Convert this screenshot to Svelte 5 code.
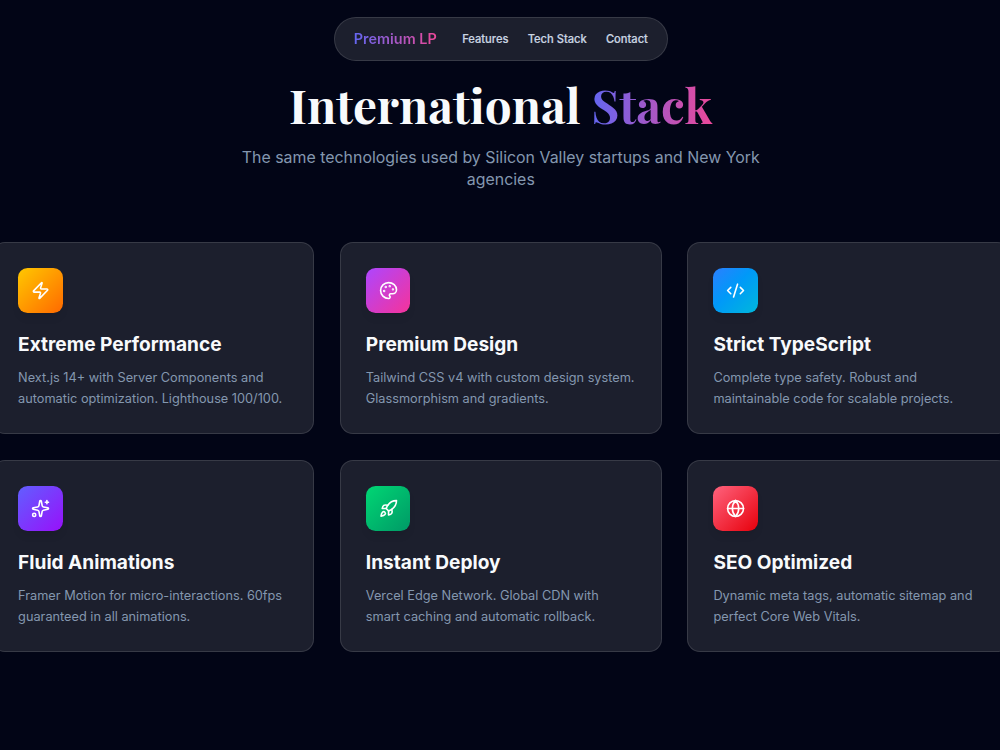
<script lang="ts">
  const links = ["Features", "Tech Stack", "Contact"];

  const features = [
    {
      icon: "zap",
      title: "Extreme Performance",
      lines: ["Next.js 14+ with Server Components and", "automatic optimization. Lighthouse 100/100."],
    },
    {
      icon: "palette",
      title: "Premium Design",
      lines: ["Tailwind CSS v4 with custom design system.", "Glassmorphism and gradients."],
    },
    {
      icon: "code",
      title: "Strict TypeScript",
      lines: ["Complete type safety. Robust and", "maintainable code for scalable projects."],
    },
    {
      icon: "sparkles",
      title: "Fluid Animations",
      lines: ["Framer Motion for micro-interactions. 60fps", "guaranteed in all animations."],
    },
    {
      icon: "rocket",
      title: "Instant Deploy",
      lines: ["Vercel Edge Network. Global CDN with", "smart caching and automatic rollback."],
    },
    {
      icon: "globe",
      title: "SEO Optimized",
      lines: ["Dynamic meta tags, automatic sitemap and", "perfect Core Web Vitals."],
    },
  ];
</script>

<div class="page">
  <nav class="navbar">
    <span class="brand gradient-text">Premium LP</span>
    {#each links as link}
      <a href="#top">{link}</a>
    {/each}
  </nav>

  <header class="heading">
    <h1>International <span class="gradient-text">Stack</span></h1>
    <p>The same technologies used by Silicon Valley startups and New York agencies</p>
  </header>

  <section class="grid">
    {#each features as feature}
      <article class="card">
        <div class="icon {feature.icon}">
          <svg viewBox="0 0 24 24">
            {#if feature.icon === "zap"}
              <path d="M4 14a1 1 0 0 1-.78-1.63l9.9-10.2a.5.5 0 0 1 .86.46l-1.92 6.02A1 1 0 0 0 13 10h7a1 1 0 0 1 .78 1.63l-9.9 10.2a.5.5 0 0 1-.86-.46l1.92-6.02A1 1 0 0 0 11 14z" />
            {:else if feature.icon === "palette"}
              <path d="M12 22a1 1 0 0 1 0-20 10 9 0 0 1 10 9 5 5 0 0 1-5 5h-2.25a1.75 1.75 0 0 0-1.4 2.8l.3.4a1.75 1.75 0 0 1-1.4 2.8z" />
              <circle cx="13.5" cy="6.5" r=".5" fill="currentColor" />
              <circle cx="17.5" cy="10.5" r=".5" fill="currentColor" />
              <circle cx="6.5" cy="12.5" r=".5" fill="currentColor" />
              <circle cx="8.5" cy="7.5" r=".5" fill="currentColor" />
            {:else if feature.icon === "code"}
              <path d="m18 16 4-4-4-4" />
              <path d="m6 8-4 4 4 4" />
              <path d="m14.5 4-5 16" />
            {:else if feature.icon === "sparkles"}
              <path d="M11.017 2.814a1 1 0 0 1 1.966 0l1.051 5.558a2 2 0 0 0 1.594 1.594l5.558 1.051a1 1 0 0 1 0 1.966l-5.558 1.051a2 2 0 0 0-1.594 1.594l-1.051 5.558a1 1 0 0 1-1.966 0l-1.051-5.558a2 2 0 0 0-1.594-1.594l-5.558-1.051a1 1 0 0 1 0-1.966l5.558-1.051a2 2 0 0 0 1.594-1.594z" />
              <path d="M20 2v4M22 4h-4" />
              <circle cx="4" cy="20" r="2" />
            {:else if feature.icon === "rocket"}
              <path d="M4.5 16.5c-1.5 1.26-2 5-2 5s3.74-.5 5-2c.71-.84.7-2.13-.09-2.91a2.18 2.18 0 0 0-2.91-.09z" />
              <path d="m12 15-3-3a22 22 0 0 1 2-3.95A12.88 12.88 0 0 1 22 2c0 2.72-.78 7.5-6 11a22.35 22.35 0 0 1-4 2z" />
              <path d="M9 12H4s.55-3.03 2-4c1.62-1.08 5 0 5 0" />
              <path d="M12 15v5s3.03-.55 4-2c1.08-1.62 0-5 0-5" />
            {:else}
              <circle cx="12" cy="12" r="10" />
              <path d="M12 2a14.5 14.5 0 0 0 0 20 14.5 14.5 0 0 0 0-20" />
              <path d="M2 12h20" />
            {/if}
          </svg>
        </div>
        <h3>{feature.title}</h3>
        <p>{feature.lines[0]}<br />{feature.lines[1]}</p>
      </article>
    {/each}
  </section>
</div>

<style>
  :global(body) {
    background: #020516;
    overflow: hidden;
  }

  .page {
    width: 1001.6px;
    height: 750px;
    padding-top: 17px;
    box-sizing: border-box;
    display: flex;
    flex-direction: column;
    align-items: center;
    background: #020516;
    font-family: Inter, "Liberation Sans", sans-serif;
    color: #f8fafc;
  }

  .gradient-text {
    background: linear-gradient(to right, #6366f1, #ec4899);
    -webkit-background-clip: text;
    background-clip: text;
    color: transparent;
  }

  .navbar {
    width: 334px;
    height: 43.6px;
    padding: 0 19px;
    box-sizing: border-box;
    display: flex;
    align-items: center;
    gap: 19.2px;
    border: 1px solid rgba(255, 255, 255, 0.12);
    border-radius: 22px;
    background: #1c1f2d;
    white-space: nowrap;
  }

  .brand {
    margin-right: 6.2px;
    padding-bottom: 1px;
    font-size: 14.45px;
    font-weight: 600;
  }

  .navbar a {
    color: #cad5e2;
    font-size: 11.15px;
    font-weight: 500;
    text-decoration: none;
    -webkit-text-stroke: 0.2px #cad5e2;
  }

  .heading {
    width: 540px;
    text-align: center;
  }

  h1 {
    margin: 19px 0 0;
    font-family: "Playfair Display", "Liberation Serif", serif;
    font-size: 47.7px;
    font-weight: 700;
    line-height: 48px;
    white-space: nowrap;
  }

  .heading p {
    margin: 19.2px 0 0;
    color: #8497af;
    font-size: 15.92px;
    line-height: 22.4px;
  }

  .grid {
    width: 1017.4px;
    flex-shrink: 0;
    margin-top: 50.4px;
    display: grid;
    grid-template-columns: repeat(3, 1fr);
    gap: 25.6px;
  }

  .card {
    height: 192.4px;
    padding: 25px;
    box-sizing: border-box;
    border: 1px solid rgba(255, 255, 255, 0.12);
    border-radius: 13px;
    background: #1c1f2d;
  }

  .icon {
    width: 44.6px;
    height: 44.6px;
    display: flex;
    align-items: center;
    justify-content: center;
    border-radius: 9.6px;
    color: #fff;
    box-shadow: 0 6px 10px -3px rgba(0, 0, 0, 0.12);
  }

  .icon svg {
    width: 19.1px;
    height: 19.1px;
    fill: none;
    stroke: currentColor;
    stroke-width: 2;
    stroke-linecap: round;
    stroke-linejoin: round;
  }

  .zap {
    background: linear-gradient(to bottom right, #ffc800, #ff6900);
  }

  .palette {
    background: linear-gradient(to bottom right, #ad46ff, #f6339a);
  }

  .code {
    background: linear-gradient(to bottom right, #2b7fff, #0099f8 45%, #00b8db);
  }

  .sparkles {
    background: linear-gradient(to bottom right, #615fff, #9810fa);
  }

  .rocket {
    background: linear-gradient(to bottom right, #00d774, #009966);
  }

  .globe {
    background: linear-gradient(to bottom right, #ff637e, #e7000b);
  }

  h3 {
    margin: 19px 0 10.6px;
    font-size: 19.1px;
    font-weight: 700;
    line-height: 25.6px;
  }

  .card p {
    margin: 0;
    color: #8497af;
    font-size: 12.74px;
    line-height: 20.8px;
    white-space: nowrap;
  }
</style>
